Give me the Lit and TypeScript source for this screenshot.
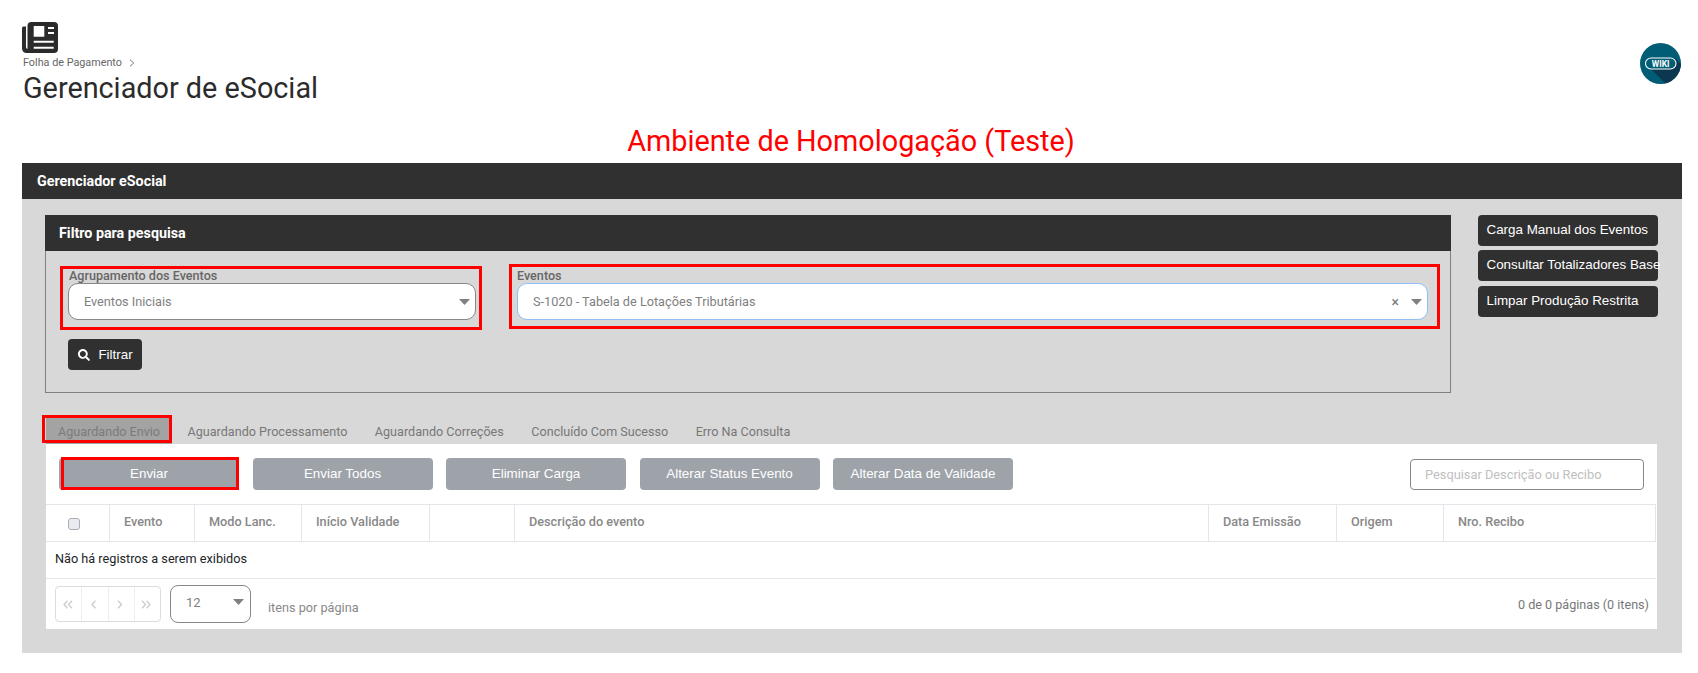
import { LitElement, html, css } from "lit";
import { customElement } from "lit/decorators.js";

const caret = html`<svg class="caret" width="11" height="6" viewBox="0 0 11 6"><path d="M0 0h11L5.500 6z" fill="#808080"/></svg>`;

const chev = (d: string, w: number) => html`<span><svg width="${w}" height="9" viewBox="0 0 ${w} 9"><path d="${d}" fill="none" stroke="#ccc" stroke-width="1.300"/></svg></span>`;

const columns = ["", "Evento", "Modo Lanc.", "Início Validade", "", "Descrição do evento", "Data Emissão", "Origem", "Nro. Recibo"];

@customElement("app-root")
export class AppRoot extends LitElement {
  static styles = css`
    :host { display: block; width: 1698px; height: 673px; background: #fff; font-family: Roboto, "Liberation Sans", sans-serif; overflow: hidden; color: #212529; }
    * { box-sizing: border-box; }
    .top { display: flex; justify-content: space-between; padding: 22px 17px 0 22px; height: 106px; }
    .logo { display: block; }
    .crumb { font-size: 10.800px; line-height: 16px; height: 16px; margin-top: 2px; margin-left: 1px; color: #666; display: flex; align-items: center; gap: 7px; }
    .crumb svg { display: block; }
    h1 { margin: -1px 0 0 1px; font-weight: 400; font-size: 28.800px; line-height: 36px; color: #2b2b2b; }
    .wiki { margin-top: 21px; display: block; }
    .env { margin: 17px 0 4px; text-align: center; color: #f00; font-size: 28.800px; line-height: 36px; padding-left: 4px; height: 36px; }
    .main { margin-left: 22px; width: 1660px; height: 490px; background: #d8d8d8; }
    .bar { height: 36px; background: #303030; color: #fff; font-weight: 700; font-size: 14.300px; line-height: 37px; padding-left: 15px; }
    .upper { display: flex; margin-top: 16px; margin-left: 23px; }
    .filter { width: 1406px; height: 178px; display: flex; flex-direction: column; }
    .filter .bar { flex: none; padding-left: 14px; }
    .filter-body { flex: 1; border: 1px solid #808080; border-top: 0; padding: 15px 0 0 14px; }
    .fields { display: flex; gap: 27px; }
    .field { border: 3px solid #f00; padding: 0 3px 0 5px; height: 64px; width: 422px; }
    .field.wide { width: 931px; margin-top: -2px; height: 65px; padding: 2px 9px 0 5px; }
    .field.wide .label { margin-left: 0; }
    .label { font-size: 12.600px; font-weight: 500; line-height: 14px; color: #666; margin-left: 1px; }
    .select { height: 37px; background: #fff; border: 1px solid #888; border-radius: 10px; display: flex; align-items: center; padding: 0 5px 0 15px; font-size: 12.700px; color: #808080; }
    .field.wide .select { border-color: #8ec0f5; }
    .select .text { flex: 1; }
    .select .x { font-size: 14px; line-height: 1; color: #777; margin-right: 12px; }
    .filtrar { margin: 9px 0 0 8px; width: 74px; height: 31px; background: #303030; color: #fff; border-radius: 4px; display: flex; align-items: center; justify-content: center; gap: 8px; font-family: "Liberation Sans", sans-serif; font-size: 13.400px; padding-left: 1px; }
    .side { margin-left: 27px; width: 180px; display: flex; flex-direction: column; gap: 4px; font-family: "Liberation Sans", sans-serif; }
    .side div { height: 31px; background: #303030; color: #fff; border-radius: 4px; font-size: 13.400px; line-height: 30px; padding-left: 8.500px; white-space: nowrap; }
    .side div.third { margin-top: 1px; }
    .tabs { display: flex; gap: 3.500px; margin: 23px 0 0 24px; height: 28px; }
    .tab { position: relative; padding: 0 12px; font-size: 12.600px; line-height: 32px; color: #777; }
    .tab.active { background: #a3a3a3; color: #7b7b7b; }
    .mark { position: absolute; border: 3px solid #f00; pointer-events: none; }
    .tab .mark { left: -4px; right: 0; top: -1px; bottom: 1px; }
    .panel { margin-left: 24px; width: 1611px; height: 185px; background: #fff; padding-top: 14px; }
    .actions { display: flex; align-items: center; padding: 0 13px; height: 32px; gap: 13.500px; }
    .btn { position: relative; width: 180px; height: 32px; background: #9ea3aa; color: #fff; border-radius: 4px; font-family: "Liberation Sans", sans-serif; font-size: 13.400px; line-height: 31px; text-align: center; }
    .btn .mark { left: 2px; right: 0; top: -1px; bottom: 0; }
    .search { margin-left: auto; width: 234px; height: 31px; border: 1px solid #888; border-radius: 4px; font-size: 12.800px; line-height: 29px; padding-left: 14px; color: #c0c0c0; }
    .thead { margin: 14px 1px 0 0; height: 38px; display: grid; grid-template-columns: 64px 85px 107px 128px 85px 694px 128px 107px 1fr; border-top: 1px solid #e2e5e9; border-bottom: 1px solid #e2e5e9; border-right: 1px solid #e2e5e9; }
    .th { border-right: 1px solid #e2e5e9; font-size: 12.700px; font-weight: 500; color: #888; padding-left: 14px; line-height: 33px; }
    .th:last-child { border-right: 0; }
    .check { display: flex; align-items: center; justify-content: center; padding: 2px 8px 0 0; }
    .check span { width: 12px; height: 12px; border: 1px solid #a8adb3; border-radius: 3px; background: #e9ecef; display: block; }
    .row { height: 37px; margin: 0 1px 0 0; padding-left: 9px; border-bottom: 1px solid #e2e5e9; font-size: 12.700px; line-height: 34px; color: #212529; }
    .foot { display: flex; align-items: center; height: 50px; padding: 0 8px 0 9px; }
    .pager { display: flex; width: 106px; height: 36px; border: 1px solid #ddd; border-radius: 4px; }
    .pager span { flex: 1; border-right: 1px solid #eee; display: flex; align-items: center; justify-content: center; padding-right: 2px; }
    .pager span:last-child { border-right: 0; }
    .pager svg { display: block; }
    .size { margin-left: 9px; width: 81px; height: 38px; border: 1px solid #888; border-radius: 8px; display: flex; align-items: center; padding: 0 6px 4px 15px; font-size: 13px; color: #808080; justify-content: space-between; }
    .per { margin-left: 17px; font-size: 12.700px; color: #888; margin-top: 6px; }
    .total { margin-left: auto; font-size: 12.600px; color: #777; }
  `;

  render() {
    return html`
      <div class="top">
        <div>
          <svg class="logo" width="36" height="31" viewBox="0 0 36 31">
            <path d="M0 6a1.500 1.500 0 0 1 1.500-1.500H4V25a2 2 0 0 0 2 2v4h-1.500A4.500 4.500 0 0 1 0 26.500z" fill="#2b2b2b"/>
            <path fill-rule="evenodd" fill="#2b2b2b" d="M9.500 0H32a4 4 0 0 1 4 4v23a4 4 0 0 1-4 4H4a4 4 0 0 0 1.500-3V4a4 4 0 0 1 4-4zM11.700 4v10.700h10.600V4zM26 5v2h6V5zm0 5v2h6v-2zM11.700 18.700v2h20v-2zm0 6v2h20v-2z"/>
          </svg>
          <div class="crumb">Folha de Pagamento
            <svg width="6" height="8" viewBox="0 0 6 8"><path d="M1 .7 4.700 4 1 7.300" fill="none" stroke="#777" stroke-width="1"/></svg>
          </div>
          <h1>Gerenciador de eSocial</h1>
        </div>
        <svg class="wiki" width="41" height="41" viewBox="0 0 41 41">
          <defs><clipPath id="c"><circle cx="20.500" cy="20.500" r="20.500"/></clipPath></defs>
          <circle cx="20.500" cy="20.500" r="20.500" fill="#015c75"/>
          <path clip-path="url(#c)" d="M7 22 L27 42 H50 V30 L35 15z" fill="#0b3850"/>
          <rect x="5.500" y="15" width="30.500" height="11" rx="5.500" fill="#015c75" stroke="#fff" stroke-width="1.100"/>
          <text x="20.700" y="23.700" text-anchor="middle" font-family="Roboto, sans-serif" font-weight="700" font-size="8.500" fill="#fff">WIKI</text>
        </svg>
      </div>
      <div class="env">Ambiente de Homologação (Teste)</div>
      <div class="main">
        <div class="bar">Gerenciador eSocial</div>
        <div class="upper">
          <div class="filter">
            <div class="bar">Filtro para pesquisa</div>
            <div class="filter-body">
              <div class="fields">
                <div class="field">
                  <div class="label">Agrupamento dos Eventos</div>
                  <div class="select"><span class="text">Eventos Iniciais</span>${caret}</div>
                </div>
                <div class="field wide">
                  <div class="label">Eventos</div>
                  <div class="select"><span class="text">S-1020 - Tabela de Lotações Tributárias</span><span class="x">×</span>${caret}</div>
                </div>
              </div>
              <div class="filtrar">
                <svg width="12" height="12" viewBox="0 0 512 512"><path fill="#fff" d="M505 442.700L405.300 343c-4.500-4.500-10.600-7-17-7H372c27.600-35.300 44-79.700 44-128C416 93.100 322.900 0 208 0S0 93.100 0 208s93.100 208 208 208c48.300 0 92.700-16.400 128-44v16.300c0 6.400 2.500 12.500 7 17l99.700 99.700c9.400 9.400 24.600 9.400 33.900 0l28.300-28.300c9.400-9.400 9.400-24.600.1-34zM208 336c-70.700 0-128-57.200-128-128 0-70.700 57.200-128 128-128 70.700 0 128 57.200 128 128 0 70.700-57.200 128-128 128z"/></svg>
                Filtrar
              </div>
            </div>
          </div>
          <div class="side">
            <div>Carga Manual dos Eventos</div>
            <div>Consultar Totalizadores Base</div>
            <div class="third">Limpar Produção Restrita</div>
          </div>
        </div>
        <div class="tabs">
          <div class="tab active">Aguardando Envio<span class="mark"></span></div>
          <div class="tab">Aguardando Processamento</div>
          <div class="tab">Aguardando Correções</div>
          <div class="tab">Concluído Com Sucesso</div>
          <div class="tab">Erro Na Consulta</div>
        </div>
        <div class="panel">
          <div class="actions">
            <div class="btn">Enviar<span class="mark"></span></div>
            <div class="btn">Enviar Todos</div>
            <div class="btn">Eliminar Carga</div>
            <div class="btn">Alterar Status Evento</div>
            <div class="btn">Alterar Data de Validade</div>
            <div class="search">Pesquisar Descrição ou Recibo</div>
          </div>
          <div class="thead">
            ${columns.map((c, i) => i === 0
              ? html`<div class="th check"><span></span></div>`
              : html`<div class="th">${c}</div>`)}
          </div>
          <div class="row">Não há registros a serem exibidos</div>
          <div class="foot">
            <div class="pager">
              ${chev("M4.500.7 1 4.500l3.500 3.800M9 .7 5.500 4.500 9 8.300", 10)}
              ${chev("M4.500.7 1 4.500l3.500 3.800", 6)}
              ${chev("M1 .7 4.500 4.500 1 8.300", 6)}
              ${chev("M1 .7 4.500 4.500 1 8.300M5.500 .7 9 4.500 5.500 8.300", 10)}
            </div>
            <div class="size">12 ${caret}</div>
            <div class="per">itens por página</div>
            <div class="total">0 de 0 páginas (0 itens)</div>
          </div>
        </div>
      </div>
    `;
  }
}
